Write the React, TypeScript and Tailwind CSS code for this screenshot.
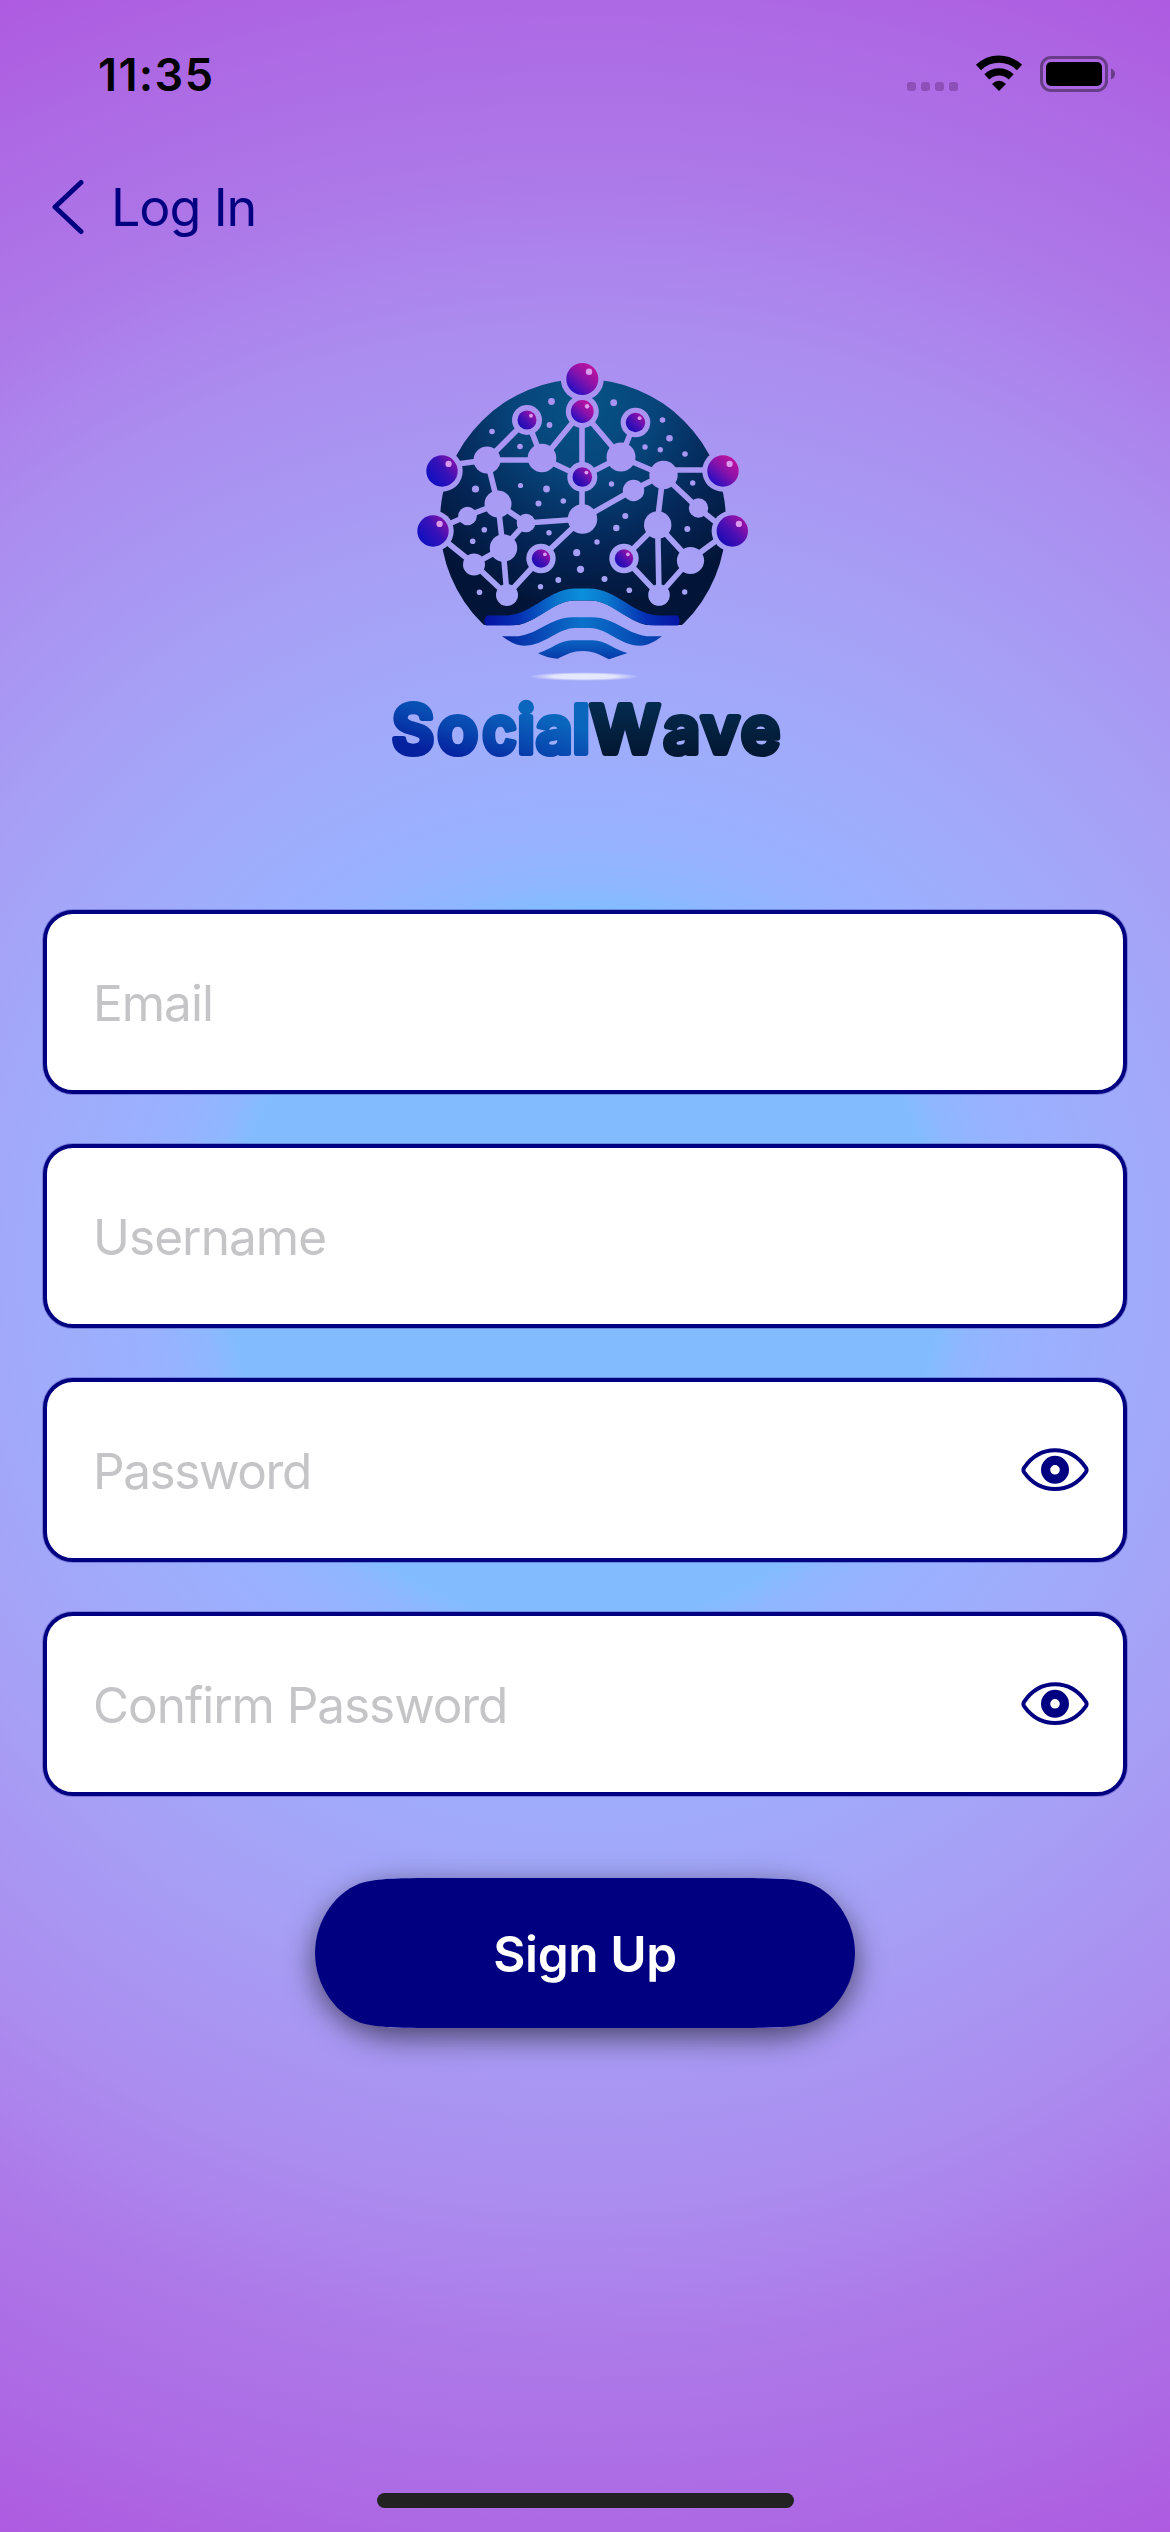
import React from "react";

type Pt = [number, number];

const NODES: [number, number, number][] = [
  [487, 460, 13.5], [542, 458, 14.3], [498, 504, 13.5], [467.5, 516, 9.3],
  [526, 523, 9.3], [503.5, 548, 13.7], [474, 564.5, 11], [507, 595, 11],
  [582.5, 519, 14.7], [621, 457, 14.5], [663.5, 475, 14.2], [633.5, 490.5, 10.7],
  [698.5, 508, 9.7], [657.7, 525, 13.7], [690.5, 560.5, 13.6], [659, 595, 10.8],
];

const ORBS: { c: Pt; r: number; halo: number; fill: string }[] = [
  { c: [582.3, 379], r: 16, halo: 21.5, fill: "url(#orbPink)" },
  { c: [582.3, 411.5], r: 11.4, halo: 16.5, fill: "url(#orbPink)" },
  { c: [582.3, 477], r: 9.8, halo: 15, fill: "url(#orbViolet)" },
  { c: [527, 420], r: 9.5, halo: 15, fill: "url(#orbViolet)" },
  { c: [635.5, 422.5], r: 9.7, halo: 14.8, fill: "url(#orbViolet)" },
  { c: [541, 558.5], r: 9.2, halo: 14.7, fill: "url(#orbViolet)" },
  { c: [624, 558.5], r: 9.2, halo: 14.7, fill: "url(#orbViolet)" },
  { c: [442, 471], r: 15.7, halo: 20.7, fill: "url(#orbBlue)" },
  { c: [433, 531], r: 15.7, halo: 20.7, fill: "url(#orbBlue)" },
  { c: [723, 471], r: 15.7, halo: 20.7, fill: "url(#orbPink)" },
  { c: [732.3, 531], r: 15.7, halo: 20.7, fill: "url(#orbViolet)" },
];

const EDGES =
  "M442 466L487 460L527 420L542 458M487 460H542L582 411M542 458L582 477M582 411V519" +
  "M487 460L498 504L467 516L433 531M498 504L526 523L503 548L498 504M526 523L582 519" +
  "M503 548L474 564L507 595L503 548M474 564L433 531M507 595L541 558L582 519" +
  "M582 411L621 457L635 422M621 457L582 477M621 457L663 475M663 470H723M663 475L633 490L582 519" +
  "M663 475L698 508L732 535M663 475L657 525L624 558L659 595L657.7 525L690 560L732 529M690 560L659 595";

const DOTS: [number, number, number][] = [
  [551.5, 401.5, 3.4], [549.5, 425, 2.9], [492, 431.5, 2.8], [520, 446.5, 2.8],
  [475.5, 489, 3.6], [520.5, 485.5, 2.6], [546.5, 489, 3.4], [538.5, 503.5, 3],
  [563.3, 501, 2.8], [484.3, 529.7, 2.8], [472.7, 541.3, 2.8], [549, 532.7, 2.7],
  [479.5, 592.3, 2.8], [540.5, 586.7, 2.7], [558.3, 580, 2.9], [576.7, 552.7, 3.6],
  [580.5, 569.3, 3.6], [597, 542, 2.7], [604.5, 579, 3], [629.3, 590.3, 2.8],
  [613.7, 402.7, 3.4], [662.5, 420, 2.8], [669.5, 438.3, 3.3], [645, 447, 2.7],
  [660.3, 449.7, 2.7], [685, 454, 2.8], [611.5, 484, 2.7], [692.7, 483, 2.7],
  [625.3, 516, 3], [616.3, 528, 3.2], [687.3, 529, 3], [684.7, 592, 2.7],
];

function Logo() {
  return (
    <svg viewBox="380 350 410 436" className="h-[436px] w-[410px]" role="img" aria-label="SocialWave">
      <defs>
        <radialGradient id="globe" gradientUnits="userSpaceOnUse" cx="584" cy="405" r="205">
          <stop offset="0" stopColor="#065487" />
          <stop offset=".35" stopColor="#07447a" />
          <stop offset=".7" stopColor="#042556" />
          <stop offset="1" stopColor="#021538" />
        </radialGradient>
        <linearGradient id="orbPink" x1=".85" y1=".1" x2=".15" y2=".9">
          <stop offset="0" stopColor="#c2129b" />
          <stop offset=".45" stopColor="#8a12ab" />
          <stop offset="1" stopColor="#1f0fc4" />
        </linearGradient>
        <linearGradient id="orbViolet" x1=".9" y1=".1" x2=".15" y2=".85">
          <stop offset="0" stopColor="#a812a4" />
          <stop offset=".55" stopColor="#4c10b4" />
          <stop offset="1" stopColor="#1a0cb4" />
        </linearGradient>
        <linearGradient id="orbBlue" x1=".95" y1=".1" x2=".15" y2=".75">
          <stop offset="0" stopColor="#8f12a6" />
          <stop offset=".5" stopColor="#3812b8" />
          <stop offset="1" stopColor="#150fc0" />
        </linearGradient>
        <linearGradient id="wave1" gradientUnits="userSpaceOnUse" x1="484" y1="0" x2="681" y2="0">
          <stop offset="0" stopColor="#0613a4" />
          <stop offset=".18" stopColor="#0530b4" />
          <stop offset=".38" stopColor="#0a78cc" />
          <stop offset=".5" stopColor="#0b90dc" />
          <stop offset=".62" stopColor="#0a78cc" />
          <stop offset=".82" stopColor="#0530b4" />
          <stop offset="1" stopColor="#0613a4" />
        </linearGradient>
        <linearGradient id="wave2" gradientUnits="userSpaceOnUse" x1="502" y1="0" x2="662" y2="0">
          <stop offset="0" stopColor="#0524a4" />
          <stop offset=".5" stopColor="#0b72ca" />
          <stop offset="1" stopColor="#053aae" />
        </linearGradient>
        <linearGradient id="wave3" gradientUnits="userSpaceOnUse" x1="0" y1="640" x2="0" y2="660">
          <stop offset="0" stopColor="#0a62c2" />
          <stop offset="1" stopColor="#0638a8" />
        </linearGradient>
        <linearGradient id="social" gradientUnits="userSpaceOnUse" x1="480" y1="698" x2="462" y2="760">
          <stop offset="0" stopColor="#0a66bd" />
          <stop offset=".5" stopColor="#0848b0" />
          <stop offset="1" stopColor="#0521a0" />
        </linearGradient>
        <linearGradient id="waveText" gradientUnits="userSpaceOnUse" x1="0" y1="700" x2="0" y2="758">
          <stop offset="0" stopColor="#042c50" />
          <stop offset="1" stopColor="#031631" />
        </linearGradient>
        <radialGradient id="glow">
          <stop offset="0" stopColor="#e6ecfb" />
          <stop offset=".6" stopColor="#e2e6fb" />
          <stop offset="1" stopColor="#cfd0fb" stopOpacity=".15" />
        </radialGradient>
        <mask id="network" maskUnits="userSpaceOnUse" x="380" y="340" width="410" height="300">
          <rect x="380" y="340" width="410" height="285" fill="#fff" />
          <path d={EDGES} fill="none" stroke="#000" strokeWidth="5.6" />
          {NODES.map(([x, y, r], i) => (
            <circle key={i} cx={x} cy={y} r={r} />
          ))}
          {ORBS.map((o, i) => (
            <circle key={i} cx={o.c[0]} cy={o.c[1]} r={o.halo} />
          ))}
          {DOTS.map(([x, y, r], i) => (
            <circle key={i} cx={x} cy={y} r={r} />
          ))}
          <path d="M512 626C535 625 552 600.5 575 600.5H590C613 600.5 630 625 653 626Z" />
        </mask>
      </defs>
      <circle cx="583" cy="522" r="143" fill="url(#globe)" mask="url(#network)" />
      {ORBS.map(({ c: [x, y], r, fill }, i) => (
        <g key={i}>
          <circle cx={x} cy={y} r={r} fill={fill} />
          <circle cx={x + r * 0.42} cy={y - r * 0.45} r={r * 0.2} fill="#d99af0" />
        </g>
      ))}
      <path
        d="M487 615.5H505C532 615.5 548 588.5 576 588.5H589C617 588.5 633 615.5 660 615.5H678Q681 622 678 625.5H655C628 625.5 613 600.5 590 600.5H575C552 600.5 537 625.5 510 625.5H486Q482 621 487 615.5Z"
        fill="url(#wave1)"
      />
      <path
        d="M502 636.3H514C537 636.3 549 617.2 573 617.2H592C616 617.2 628 636.3 651 636.3H662C654 642 648 645.7 640 645.7C620 645.7 607 628 590 628H575C558 628 545 645.7 524 645.7C516 645.7 509 641 502 636.3Z"
        fill="url(#wave2)"
      />
      <path
        d="M538 653.3C551 649.5 560 640.3 572 640.3H593C605 640.3 614 649.5 627.5 653L609 659.3C600 655 594 651 583 651S568 654 557.5 658.7C550 658.5 544 656 538 653.3Z"
        fill="url(#wave3)"
      />
      <ellipse cx="584" cy="676.5" rx="54" ry="4.3" fill="url(#glow)" />
      <g fontFamily="Inter, sans-serif" fontSize="66" fontWeight="600" strokeWidth="6" strokeLinejoin="round" strokeLinecap="round">
        <text y="753" fill="url(#social)" stroke="url(#social)">
          <tspan x="392" textLength="42" lengthAdjust="spacingAndGlyphs">S</tspan>
          <tspan x="437.5" textLength="40.5" lengthAdjust="spacingAndGlyphs">o</tspan>
          <tspan x="482.5" textLength="34" lengthAdjust="spacingAndGlyphs">c</tspan>
          <tspan x="517.5">i</tspan>
          <tspan x="536" textLength="36.5" lengthAdjust="spacingAndGlyphs">a</tspan>
          <tspan x="572.5">l</tspan>
        </text>
        <text y="753" fill="url(#waveText)" stroke="url(#waveText)">
          <tspan x="590" textLength="70" lengthAdjust="spacingAndGlyphs">W</tspan>
          <tspan x="663.5" textLength="36.5" lengthAdjust="spacingAndGlyphs">a</tspan>
          <tspan x="701" textLength="38.5" lengthAdjust="spacingAndGlyphs">v</tspan>
          <tspan x="741">e</tspan>
        </text>
      </g>
    </svg>
  );
}

function StatusIcons() {
  return (
    <div className="flex items-start">
      <div className="mt-[27px] flex gap-[5px]">
        {[0, 1, 2, 3].map((i) => (
          <span key={i} className="size-[9px] rounded-[3px] bg-[#8c50b8]" />
        ))}
      </div>
      <svg viewBox="0 0 48 36" className="ml-[17px] h-9 w-12">
        <path d="M3.5 12.5C15 1.3 33 1.3 44.5 12.5" fill="none" stroke="#000" strokeWidth="7.4" />
        <path d="M11.8 21.8C19 15.2 29 15.2 36.2 21.8" fill="none" stroke="#000" strokeWidth="7.2" />
        <path d="M17 29Q24 22.4 31 29L24 36Z" />
      </svg>
      <svg viewBox="0 0 76 36" className="ml-[17px] mt-px h-9 w-[76px]">
        <rect x="1.5" y="1.5" width="65" height="33" rx="9.5" fill="none" stroke="#000" strokeOpacity=".4" strokeWidth="3" />
        <rect x="6" y="6" width="56" height="24" rx="5" />
        <path d="M71 12.5Q75 14 75 18T71 23.5Z" fillOpacity=".4" />
      </svg>
    </div>
  );
}

function EyeIcon() {
  return (
    <svg viewBox="0 0 68 44" className="h-11 w-[68px]">
      <path
        d="M3.2 19.6C19-3.6 49-3.6 64.8 19.6Q66.4 22 64.8 24.4C49 46.6 19 46.6 3.2 24.4Q1.6 22 3.2 19.6Z"
        fill="none"
        stroke="#000080"
        strokeWidth="4"
      />
      <circle cx="34" cy="21.8" r="9.4" fill="none" stroke="#000080" strokeWidth="9.2" />
    </svg>
  );
}

function Field({ label, secret = false, spacing }: { label: string; secret?: boolean; spacing: string }) {
  return (
    <div className="flex h-[184px] items-center justify-between rounded-[30px] border-4 border-[#000080] bg-white pl-[46px] pr-[34px] shadow-[0_0_0_1px_rgba(0,0,128,0.25)]">
      <span className={`pt-[3px] text-[49.5px] leading-none text-[#c5c5c7] ${spacing}`}>{label}</span>
      {secret && <EyeIcon />}
    </div>
  );
}

function SignUpButton() {
  return (
    <button
      type="button"
      className="relative mt-[82px] h-[150px] w-[540px] self-center rounded-[84px/75px] text-[49.5px] font-semibold tracking-[-0.4px] text-white shadow-[0_9px_30px_rgba(0,0,0,0.58)]"
    >
      <svg viewBox="0 0 540 150" className="absolute inset-0 h-full w-full" aria-hidden="true">
        <path
          d="M115 0C80 .2 64 .8 50 4C22 11 0 42 0 75S22 139 50 146C64 149.2 80 149.8 115 150H425C460 149.8 476 149.2 490 146C518 139 540 108 540 75S518 11 490 4C476 .8 460 .2 425 0Z"
          fill="#000080"
        />
      </svg>
      <span className="relative top-px">Sign Up</span>
    </button>
  );
}

export default function App() {
  return (
    <div className="flex h-[2532px] w-[1170px] flex-col overflow-hidden bg-[radial-gradient(circle_at_50%_50%,#82bcff_355px,#8fb6ff_385px,#98b2ff_430px,#a0abfb_550px,#a6a1f6_700px,#ab8cef_940px,#ad78e8_1100px,#ad69e4_1260px,#ae5ae0_1400px)] font-['Inter',sans-serif]">
      <header className="flex h-[55px] items-start justify-between pl-[98px] pr-[54px] pt-[55px]">
        <span className="whitespace-nowrap text-[45px] font-semibold leading-[39px] tracking-[1.4px] text-black">11:35</span>
        <StatusIcons />
      </header>
      <nav className="mt-[124px] flex h-[56px] items-center pl-[50px] text-[#000080]">
        <svg viewBox="0 0 36 56" className="h-14 w-9">
          <path d="M31 3.5L5 28L31 52.5" fill="none" stroke="currentColor" strokeWidth="5" strokeLinecap="round" strokeLinejoin="round" />
        </svg>
        <span className="ml-[25px] pt-[2px] text-[52px] leading-none tracking-[-1.1px]">Log In</span>
      </nav>
      <div className="mt-[115px] flex pl-[380px]">
        <Logo />
      </div>
      <form className="mt-[124px] flex flex-col gap-[50px] px-[43px]">
        <Field label="Email" spacing="tracking-[-1px]" />
        <Field label="Username" spacing="tracking-[-0.9px]" />
        <Field label="Password" spacing="tracking-[-1.4px]" secret />
        <Field label="Confirm Password" spacing="tracking-[-1.05px]" secret />
      </form>
      <SignUpButton />
      <div className="mb-[24px] mt-auto h-[15px] w-[417px] self-center rounded-full bg-[#222222]" />
    </div>
  );
}
